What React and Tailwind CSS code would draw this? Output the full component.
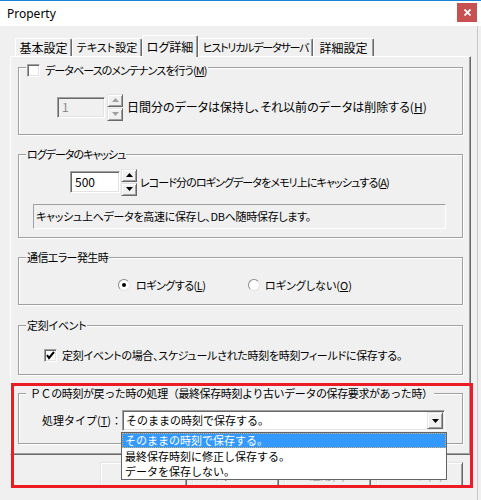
import React from "react";

const sunken =
  "border border-t-[#a0a0a0] border-l-[#a0a0a0] border-b-white border-r-white shadow-[inset_1px_1px_0_#696969,inset_-1px_-1px_0_#e3e3e3]";
const raised =
  "border border-t-[#e3e3e3] border-l-[#e3e3e3] border-b-[#696969] border-r-[#696969] shadow-[inset_1px_1px_0_#ffffff,inset_-1px_-1px_0_#a0a0a0] bg-[#f0f0f0]";

const Mn = ({ children }) => <span className="underline underline-offset-[1px]">{children}</span>;

const Tri = ({ up = false, color = "#000" }) => (
  <svg width="7" height="4" viewBox="0 0 7 4">
    <polygon points={up ? "3.5,0 7,4 0,4" : "0,0 7,0 3.5,4"} fill={color} />
  </svg>
);

const Spin = ({ disabled }) => (
  <div className="flex flex-col gap-[1px] w-[16px]">
    <div className={`${raised} h-[13px] flex items-center justify-center`}>
      <Tri up color={disabled ? "#a0a0a0" : "#000"} />
    </div>
    <div className={`${raised} h-[13px] flex items-center justify-center`}>
      <Tri color={disabled ? "#a0a0a0" : "#000"} />
    </div>
  </div>
);

const Check = ({ checked }) => (
  <div className={`${sunken} w-[13px] h-[13px] bg-white flex items-center justify-center shrink-0`}>
    {checked && (
      <svg width="9" height="9" viewBox="0 0 9 9">
        <polyline points="1,4 3,7 8,1" fill="none" stroke="#000" strokeWidth="2" />
      </svg>
    )}
  </div>
);

const Radio = ({ checked }) => (
  <div className="w-[12px] h-[12px] rounded-full bg-white border border-t-[#8a8a8a] border-l-[#8a8a8a] border-b-[#e3e3e3] border-r-[#e3e3e3] flex items-center justify-center shrink-0">
    {checked && <div className="w-[4px] h-[4px] rounded-full bg-black" />}
  </div>
);

const Group = ({ title, titleTop = "-top-[8px]", className = "", children }) => (
  <div
    className={`relative border border-[#a0a0a0] shadow-[1px_1px_0_#ffffff,inset_1px_1px_0_#ffffff] ${className}`}
  >
    <div className={`absolute left-[7px] ${titleTop} px-[1px] bg-[#f0f0f0] h-[14px] leading-[14px] flex items-center whitespace-nowrap`}>
      {title}
    </div>
    {children}
  </div>
);

const tabs = [
  { label: "基本設定", w: "w-[57px]", t: "text-[12px]" },
  { label: "テキスト設定", w: "w-[70px]", t: "text-[11px]" },
  { label: "ログ詳細", w: "w-[56px]", t: "text-[12px]", active: true },
  { label: "ヒストリカルデータサーバ", w: "w-[115px]", t: "text-[11px] tracking-[-1.2px]" },
  { label: "詳細設定", w: "w-[61px]", t: "text-[12px]" },
];

const buttons = [
  { label: "OK" },
  { label: "キャンセル" },
  { label: "適用(A)", disabled: true },
  { label: "ヘルプ(H)", disabled: true },
];

export default function App() {
  return (
    <div className="w-[481px] h-[500px] bg-[#f0f0f0] relative overflow-hidden text-[11px] text-black font-['Noto_Sans_CJK_JP','Noto_Sans',sans-serif] [font-feature-settings:'palt']">
      {/* title bar */}
      <div className="h-[26px] bg-white border-t border-[#1883d7] flex items-start justify-between pl-[7px] pr-[4px]">
        <span className="mt-[4px] text-[12px] font-['Noto_Sans',sans-serif]">Property</span>
        <div className="mt-[2px] w-[20px] h-[19px] bg-[#c75050] flex items-center justify-center">
          <svg width="7" height="7" viewBox="0 0 7 7">
            <path d="M0.5 0.5 L6.5 6.5 M6.5 0.5 L0.5 6.5" stroke="#fff" strokeWidth="1.8" />
          </svg>
        </div>
      </div>

      <div className="pt-[9px] pl-[10px] border-r border-[#c8c8c8] w-[478px] h-[474px]">
        {/* tabs */}
        <div className="flex items-end h-[21px] pl-[5px]">
          {tabs.map((t) =>
            t.active ? (
              <div
                key={t.label}
                className={`${t.w} ${t.t} relative z-10 -mb-px h-[22px] bg-[#f0f0f0] border border-b-0 border-t-white border-l-white border-r-[#696969] shadow-[inset_-1px_0_0_#a0a0a0] rounded-t-[2px] flex items-center justify-center whitespace-nowrap`}
              >
                {t.label}
              </div>
            ) : (
              <div
                key={t.label}
                className={`${t.w} ${t.t} h-[18px] border border-b-0 border-t-white border-l-white border-r-[#696969] shadow-[inset_-1px_0_0_#a0a0a0] rounded-t-[2px] flex items-center justify-center whitespace-nowrap`}
              >
                {t.label}
              </div>
            )
          )}
        </div>

        {/* tab page */}
        <div className="w-[461px] h-[399px] border border-t-white border-l-white border-r-[#696969] border-b-[#696969] shadow-[inset_-1px_-1px_0_#a0a0a0] px-[7px] pt-[10px] flex flex-col">
          <Group
            className="h-[68px] pt-[26px] pl-[38px]"
            titleTop="-top-[5px]"
            title={
              <>
                <Check />
                <span className="ml-[5px] tracking-[-0.9px]">
                  データベースのメンテナンスを行う(<Mn>M</Mn>)
                </span>
              </>
            }
          >
            <div className="flex items-center h-[26px]">
              <div className={`${sunken} w-[48px] h-[21px] flex items-center pl-[4px] text-[12px] text-[#8a8a8a]`}>1</div>
              <div className="ml-[2px]">
                <Spin disabled />
              </div>
              <span className="ml-[4px] text-[12px] whitespace-nowrap">
                日間分のデータは保持し、それ以前のデータは削除する(<Mn>H</Mn>)
              </span>
            </div>
          </Group>

          <Group
            className="mt-[19px] h-[84px] pt-[13px] pl-[51px]"
            title={<span className="tracking-[-1px]">ログデータのキャッシュ</span>}
          >
            <div className="flex items-center h-[28px]">
              <div className={`${sunken} w-[50px] h-[22px] bg-white flex items-center pl-[4px] text-[12px]`}>500</div>
              <div className="ml-[1px]">
                <Spin />
              </div>
              <span className="ml-[3px] whitespace-nowrap tracking-[-0.9px]">
                レコード分のロギングデータをメモリ上にキャッシュする(<Mn>A</Mn>)
              </span>
            </div>
            <div className="-ml-[37px] mt-[8px] w-[413px] h-[25px] border border-t-[#a0a0a0] border-l-[#a0a0a0] border-b-white border-r-white flex items-center pl-[2px] whitespace-nowrap tracking-[-0.3px]">
              キャッシュ上へデータを高速に保存し、DBへ随時保存します。
            </div>
          </Group>

          <Group
            className="mt-[19px] h-[48px] pt-[20px] pl-[99px]"
            title={<span className="tracking-[-0.6px]">通信エラー発生時</span>}
          >
            <div className="flex items-center h-[14px]">
              <div className="w-[130px] flex items-center">
                <Radio checked />
                <span className="ml-[6px] whitespace-nowrap tracking-[-0.5px]">
                  ロギングする(<Mn>L</Mn>)
                </span>
              </div>
              <Radio />
              <span className="ml-[5px] whitespace-nowrap">
                ロギングしない(<Mn>O</Mn>)
              </span>
            </div>
          </Group>

          <Group
            className="mt-[20px] h-[50px] pt-[22px] pl-[25px]"
            title={<span className="tracking-[-0.3px]">定刻イベント</span>}
          >
            <div className="flex items-center h-[14px]">
              <Check checked />
              <span className="ml-[5px] whitespace-nowrap tracking-[-0.3px]">
                定刻イベントの場合、スケジュールされた時刻を時刻フィールドに保存する。
              </span>
            </div>
          </Group>

          <Group
            className="mt-[18px] h-[51px] pt-[16px] pl-[23px] [font-feature-settings:normal]"
            title={<span className="pl-[3px] tracking-[-0.4px]">ＰＣの時刻が戻った時の処理（最終保存時刻より古いデータの保存要求があった時）</span>}
          >
            <div className="flex items-center h-[21px]">
              <span className="w-[80px] whitespace-nowrap">
                処理タイプ(<Mn>T</Mn>)：
              </span>
              <div className={`${sunken} relative w-[323px] h-[21px] bg-white flex items-center pl-[3px] pr-[1px]`}>
                <span className="flex-1 whitespace-nowrap">そのままの時刻で保存する。</span>
                <div className={`${raised} w-[16px] h-[17px] flex items-center justify-center`}>
                  <Tri />
                </div>
                {/* open list */}
                <div className="absolute z-20 -left-[2px] top-[21px] w-[326px] bg-white border border-[#646464] flex flex-col">
                  <div className="h-[15px] bg-[#3399ff] text-white border border-dotted border-[#d8b070] flex items-center pl-[2px] whitespace-nowrap">
                    そのままの時刻で保存する。
                  </div>
                  <div className="h-[16px] flex items-center pl-[3px] whitespace-nowrap">最終保存時刻に修正し保存する。</div>
                  <div className="h-[15px] flex items-center pl-[3px] whitespace-nowrap">データを保存しない。</div>
                </div>
              </div>
            </div>
          </Group>
        </div>

        {/* dialog buttons */}
        <div className="mt-[7px] ml-[90px] flex gap-[5px]">
          {buttons.map((b) => (
            <div
              key={b.label}
              className={`${raised} w-[87px] h-[26px] flex items-center justify-center whitespace-nowrap ${
                b.disabled ? "text-[#a0a0a0]" : ""
              }`}
            >
              {b.label}
            </div>
          ))}
        </div>
      </div>

      {/* red annotation frame */}
      <div className="absolute z-30 left-[11px] top-[383px] w-[462px] h-[105px] border-[3px] border-[#ed1c24] pointer-events-none" />
    </div>
  );
}
